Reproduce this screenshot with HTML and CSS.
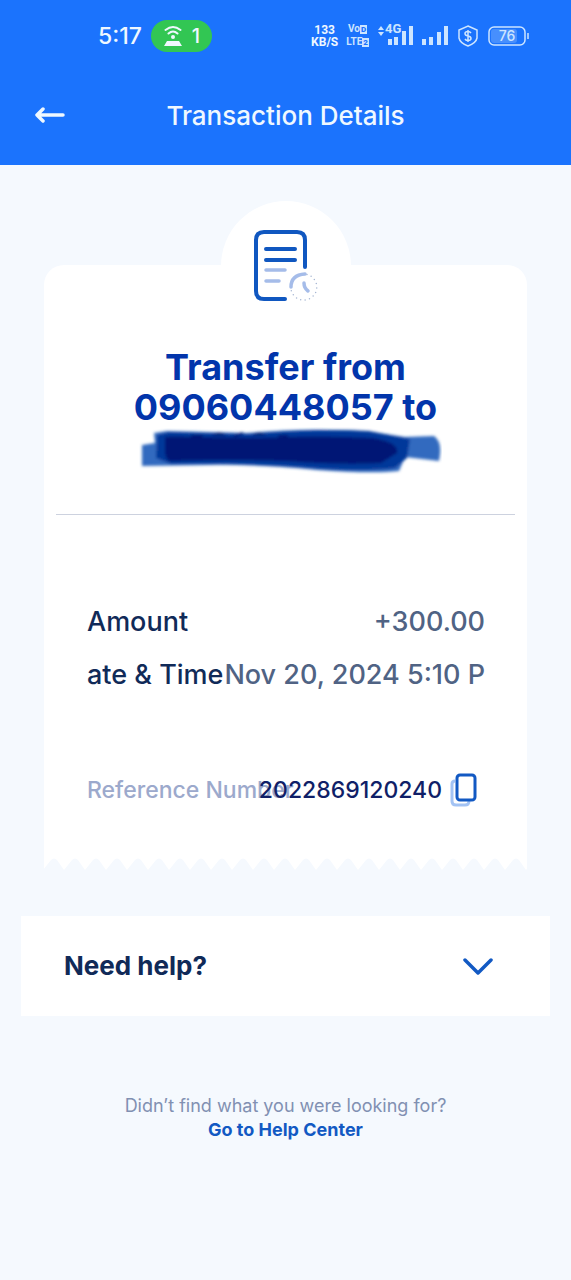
FILE: index.html
```html
<!DOCTYPE html>
<html lang="en">
<head>
<meta charset="utf-8">
<meta name="viewport" content="width=device-width, initial-scale=1">
<title>Transaction Details</title>
<link rel="stylesheet" href="styles.css">
</head>
<body>
<header class="top">
  <div class="status">
    <div class="status-left">
      <span class="clock">5:17</span>
      <span class="hotspot">
        <svg width="20" height="22" viewBox="0 0 20 22" fill="none" stroke="currentColor" stroke-width="2" stroke-linecap="round"><path d="M2.500 5Q10-1 17.500 5M5.500 8.500Q10 4.500 14.500 8.500"/><circle cx="10" cy="12" r="2" fill="currentColor" stroke="none"/><path d="M4 16h12l3 5H1z" fill="currentColor" stroke="none"/></svg>
        <span>1</span>
      </span>
    </div>
    <div class="status-right">
      <span class="stack"><span>133</span><span>KB/S</span></span>
      <span class="stack volte"><span>Vo<b class="chip">D</b></span><span>LTE<b class="chip">2</b></span></span>
      <span class="network">
        <svg width="37" height="22" viewBox="0 0 37 22" fill="currentColor"><path d="M1 5l3-4 3 4zM1 7h6l-3 4zM11 14h4v6h-4zM17 12h4v8h-4zM25 6h4v14h-4zM32 1h4v19h-4z"/></svg>
        <span class="gen">4G</span>
      </span>
      <svg width="26" height="22" viewBox="0 0 26 22" fill="currentColor"><path d="M0 14h4v6H0zM7 12h4v8H7zM15 7h4v13h-4zM22 1h4v19h-4z"/></svg>
      <svg class="shield" width="20" height="22" viewBox="0 0 20 22" fill="none" stroke="currentColor" stroke-width="1.500"><path d="M10 1l9 4v8q-1 5-9 8-8-3-9-8V5z"/><path d="M13 8q-1-1.500-3-1.500-3 0-3 2t3 2.500 3 2.500-3 2q-2 0-3-1.500M10 5v12"/></svg>
      <svg width="41" height="20" viewBox="0 0 41 20" fill="none" stroke="currentColor" stroke-width="1.500"><rect x="1" y="1" width="36" height="18" rx="5"/><rect x="3" y="3" width="26" height="14" rx="3" fill="currentColor" fill-opacity=".25" stroke="none"/><path d="M40 7v6"/><text class="level" x="19" y="15" text-anchor="middle">76</text></svg>
    </div>
  </div>
  <div class="bar">
    <button class="back" type="button" aria-label="Back"><svg width="30" height="18" viewBox="0 0 30 18" fill="none" stroke="currentColor" stroke-width="3.500" stroke-linecap="round" stroke-linejoin="round"><path d="M28 8H2M8 2L2 8l6 6"/></svg></button>
    <h1 class="title">Transaction Details</h1>
  </div>
</header>
<main class="page">
  <section class="receipt">
    <div class="badge">
      <svg width="68" height="74" viewBox="0 0 68 74" fill="none" stroke-linecap="round"><path d="M33 70H12q-8 0-8-8V11q0-8 8-8h33q8 0 8 8v27" stroke="#1057c0" stroke-width="4"/><path d="M14 20h29M14 31h29" stroke="#1057c0" stroke-width="4"/><path d="M14 41h19M14 52h13M39 58q0-12 14-13M52 54q0 5 4 8" stroke="#a5bce9" stroke-width="3.500"/><path d="M55 45.500a13 13 0 1 1-16 15" stroke="#a7b7d3" stroke-width="1.500" stroke-dasharray="0 4.500"/></svg>
    </div>
    <h2 class="heading">Transfer from<br>09060448057 to</h2>
    <svg class="marker" width="312" height="48" viewBox="-1 0 312 48">
      <defs><filter id="soft" x="-5%" y="-20%" width="110%" height="140%"><feGaussianBlur stdDeviation="1.500"/></filter></defs>
      <g filter="url(#soft)"><path d="M11 18L24 16 23 6 36 4 116 6Q186 0 240 5L274 10 303 9Q312 15 308 34L274 30 268 44Q242 47 186 43 124 37 76 38L11 39Z" fill="#326bbf"/><path d="M26 8L38 5 118 7Q186 1 238 4L279 12 276 31 264 41Q228 45 180 41 116 36 40 37L25 31Z" fill="#05379a"/><path d="M34 10Q42 9 60 10L128 11Q182 8 241 11 268 15 266 26L250 36Q209 38 156 34 94 32 38 34 34 31 34 24Z" fill="#001675"/><path d="M60 9h12M82 8q6-3 12 0M103 9l9-3M122 8q7-3 12 0M147 9h10" stroke="#001675" stroke-width="2"/></g>
    </svg>
    <hr class="rule">
    <dl class="facts">
      <div class="row"><dt>Amount</dt><dd>+300.00</dd></div>
      <div class="row"><dt>ate &amp; Time</dt><dd>Nov 20, 2024 5:10 P</dd></div>
      <div class="row reference"><dt>Reference Number</dt><dd>2022869120240</dd>
        <dd class="copy-cell"><button class="copy" type="button" aria-label="Copy reference number"><svg width="27" height="34" viewBox="0 0 27 34" fill="none" stroke-width="3"><path d="M5 8Q2 8 2 11v17q0 4 4 4h9q4 0 4-4" stroke="#a3c3f4"/><rect x="7" y="2" width="18" height="25" rx="3" fill="#fff" stroke="#1259c3"/></svg></button></dd></div>
    </dl>
    <svg class="teeth" width="100%" height="12" aria-hidden="true"><defs><pattern id="tooth" x="-1" width="21" height="12" patternUnits="userSpaceOnUse"><path d="M0 12L8 2q3-3 6 0l7 10z" fill="#f5f9fe"/></pattern></defs><rect width="100%" height="12" fill="url(#tooth)"/></svg>
  </section>
  <button class="help" type="button" aria-expanded="false"><span>Need help?</span><svg width="30" height="18" viewBox="0 0 30 18" fill="none" stroke="#1259c3" stroke-width="3.500" stroke-linecap="round" stroke-linejoin="round"><path d="M2 3l13 13L28 3"/></svg></button>
  <footer class="foot"><p>Didn’t find what you were looking for?</p><a href="#help">Go to Help Center</a></footer>
</main>
</body>
</html>
```
FILE: styles.css
```css
* { box-sizing: border-box; }
body { margin: 0; min-height: 100vh; background: #f5f9fe; color: #102a58; font-family: Inter, "Liberation Sans", sans-serif; }
h1, h2, p, dl, dt, dd { margin: 0; }
button { margin: 0; padding: 0; border: 0; background: none; color: inherit; font: inherit; }
svg { display: block; flex: none; }
.top { background: #1b73fd; color: #eff8ff; }
.status { display: flex; align-items: center; justify-content: space-between; height: 72px; padding: 0 42px 0 98px; }
.status-left, .status-right { display: flex; align-items: center; gap: 9px; }
.clock { font: 500 23px/32px Inter, sans-serif; }
.hotspot { display: flex; align-items: center; justify-content: center; gap: 9px; width: 61px; height: 32px; border-radius: 16px; background: #32c653; font: 500 20px/32px Inter, sans-serif; }
.status-right { gap: 8px; color: #cde5ff; }
.shield { margin: 0 2px; }
.stack { display: grid; justify-items: center; color: #eff8ff; font: 700 12px/12px Roboto, sans-serif; }
.volte { font-size: 10px; color: #cde5ff; }
.chip { padding: 0 1px; background: #cde5ff; color: #1b73fd; font-size: 8px; }
.network { position: relative; }
.gen { position: absolute; top: -4px; left: 8px; font: 700 13px/15px Roboto, sans-serif; }
.level { fill: currentColor; stroke: none; font: 500 14px Inter, sans-serif; }
.bar { display: grid; grid-template-columns: 30px 1fr 30px; align-items: center; padding: 28px 35px 33px; }
.title { text-align: center; font-size: 26px; line-height: 32px; font-weight: 500; white-space: nowrap; }
.page { padding: 100px 21px 32px; }
.receipt { display: flow-root; margin: 0 23px; background: #fff; border-radius: 20px 20px 0 0; }
.badge { display: flex; align-items: center; justify-content: center; width: 130px; height: 130px; margin: -64px auto 0; border-radius: 50%; background: #fff; }
.heading { margin-top: 16px; text-align: center; color: #0235ab; font-size: 36px; line-height: 40px; font-weight: 700; }
.marker { margin: 0 auto; max-width: 100%; }
.rule { height: 1px; margin: 39px 12px 0; border: 0; background: #cdd2df; }
.facts { display: grid; grid-template-columns: minmax(0, 1fr); gap: 21px; padding: 91px 42px 51px 43px; }
.row { display: flex; align-items: center; white-space: nowrap; font-size: 27px; line-height: 32px; font-weight: 500; }
.row dt { flex: 1 1 0; min-width: 0; }
.row dd { color: #506384; }
.reference { margin-top: 61px; font-size: 23px; }
.reference dt { color: #9ca9cc; }
.reference dd { color: #101f68; }
.copy-cell { margin: 0 8px; }
.copy { display: block; }
.help { display: flex; align-items: center; justify-content: space-between; width: 100%; margin-top: 46px; padding: 34px 57px 34px 43px; background: #fff; font-size: 26px; line-height: 32px; font-weight: 700; }
.foot { margin-top: 78px; text-align: center; font-size: 18px; line-height: 24px; }
.foot p { color: #8190b2; }
.foot a { color: #1259c3; font-weight: 700; text-decoration: none; }
```
